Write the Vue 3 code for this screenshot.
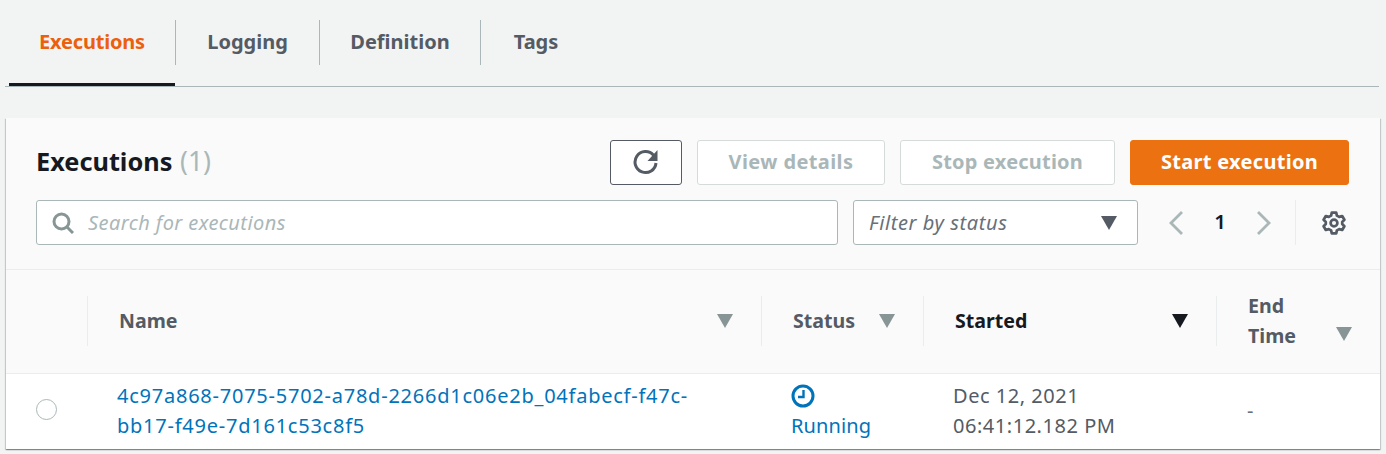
<script setup>
const tabs = [
  { label: 'Executions', active: true, w: 167 },
  { label: 'Logging', w: 144 },
  { label: 'Definition', w: 161 },
  { label: 'Tags', w: 110 }
]
</script>

<template>
  <div class="page">
    <nav class="tabs">
      <div v-for="t in tabs" :key="t.label" class="tab" :class="{ active: t.active }" :style="{ width: t.w + 'px' }">
        <span class="tab-label">{{ t.label }}</span>
      </div>
    </nav>

    <section class="card">
      <div class="head">
        <div class="title-row">
          <h2 class="title">Executions <span class="count">(1)</span></h2>
          <div class="actions">
            <button class="btn refresh" aria-label="Refresh">
              <svg width="26" height="26" viewBox="0 0 26 26" fill="none" stroke="#545b64" stroke-width="3">
                <path d="M20.5 6.2A10.5 10.5 0 1 0 23 14" />
                <path d="M24.5 1V12H14.5Z" fill="#545b64" stroke="none" />
              </svg>
            </button>
            <button class="btn disabled details">View details</button>
            <button class="btn disabled stop">Stop execution</button>
            <button class="btn primary">Start execution</button>
          </div>
        </div>
        <div class="filter-row">
          <div class="search">
            <svg width="22" height="22" viewBox="0 0 22 22" fill="none" stroke="#879596" stroke-width="3">
              <circle cx="9.5" cy="9.5" r="7.5" />
              <path d="M14.5 14.5L21 21" />
            </svg>
            <span class="placeholder">Search for executions</span>
          </div>
          <div class="select">
            <span>Filter by status</span>
            <i class="caret dark"></i>
          </div>
          <div class="pager">
            <svg width="16" height="26" viewBox="0 0 16 26" fill="none" stroke="#aab7b8" stroke-width="2.8"><path d="M14 2L3 13L14 24" /></svg>
            <span class="page-no">1</span>
            <svg width="16" height="26" viewBox="0 0 16 26" fill="none" stroke="#aab7b8" stroke-width="2.8"><path d="M2 2L13 13L2 24" /></svg>
          </div>
          <div class="settings">
            <svg width="24" height="24" viewBox="0 0 24 24" fill="none" stroke="#545b64" stroke-width="2.7" stroke-linejoin="round">
              <path d="M9.8 1.6h4.4l.7 3 2.3 1.3 3-.9 2.2 3.8-2.2 2.1v2.2l2.2 2.1-2.2 3.8-3-.9-2.3 1.3-.7 3H9.8l-.7-3-2.3-1.3-3 .9-2.2-3.8 2.2-2.1v-2.2L1.6 8.8l2.2-3.8 3 .9 2.3-1.3z" />
              <circle cx="12" cy="12" r="3.4" />
            </svg>
          </div>
        </div>
      </div>

      <div class="thead">
        <div class="th-blank"></div>
        <div class="th name"><span class="sep"></span><span>Name</span><i class="caret"></i></div>
        <div class="th status"><span class="sep"></span><span>Status</span><i class="caret"></i></div>
        <div class="th started"><span class="sep"></span><span>Started</span><i class="caret black"></i></div>
        <div class="th end"><span class="sep"></span><span>End<br />Time</span><i class="caret low"></i></div>
      </div>

      <div class="row">
        <div class="radio-cell"><span class="radio"></span></div>
        <div class="cell link">4c97a868-7075-5702-a78d-2266d1c06e2b_04fabecf-f47c-<br />bb17-f49e-7d161c53c8f5</div>
        <div class="cell running">
          <svg width="24" height="24" viewBox="0 0 24 24" fill="none" stroke="#0073bb" stroke-width="3">
            <circle cx="12" cy="12" r="10" />
            <path d="M12.5 6V13H7" stroke-width="2.4" />
          </svg>
          <span class="running-label">Running</span>
        </div>
        <div class="cell date">Dec 12, 2021<br />06:41:12.182 PM</div>
        <div class="cell dash">-</div>
      </div>
    </section>
  </div>
</template>

<style>
html, body { margin: 0; background: #f2f3f3; }
</style>

<style scoped>
.page {
  width: 1386px;
  height: 454px;
  overflow: hidden;
  background: #f2f3f3;
  font-family: "Noto Sans", sans-serif;
  font-size: 20px;
  color: #545b64;
  box-sizing: border-box;
  padding: 0 0 0 5px;
}
.tabs {
  display: flex;
  height: 87px;
  box-sizing: border-box;
  border-bottom: 1px solid #aab7b8;
  padding-left: 4px;
  margin-right: 7px;
}
.tab {
  height: 86px;
  box-sizing: border-box;
  padding-top: 20px;
  display: flex;
  justify-content: center;
  align-items: flex-start;
  position: relative;
}
.tab-label {
  font-weight: 700;
  font-size: 20px;
  display: block;
  width: 100%;
  text-align: center;
  border-right: 1px solid #aab7b8;
  height: 45px;
  line-height: 44px;
}
.tab:last-child .tab-label { border-right: 0; }
.tab.active { color: #ec5f0d; }
.tab.active .tab-label { letter-spacing: -0.2px; }
.tab.active::after {
  content: "";
  position: absolute;
  left: 0;
  right: 1px;
  bottom: 0;
  height: 3px;
  background: #16191f;
}
.card {
  margin-top: 31px;
  margin-left: 1px;
  width: 1374px;
  height: 331px;
  background: #fafafa;
  box-shadow: 0 1px 1px 0 rgba(0, 28, 36, 0.3), 1px 1px 1px 0 rgba(0, 28, 36, 0.15), -1px 1px 1px 0 rgba(0, 28, 36, 0.15);
  display: flex;
  flex-direction: column;
}
.head {
  height: 152px;
  box-sizing: border-box;
  padding: 22px 31px 0 30px;
  border-bottom: 1px solid #eaeded;
}
.title-row { display: flex; justify-content: space-between; align-items: center; height: 45px; }
.title { margin: 0; font-size: 25.3px; font-weight: 700; color: #16191f; line-height: 43px; height: 45px; }
.count { font-weight: 400; color: #aab7b8; font-size: 26.5px; margin-left: 1px; }
.actions { display: flex; gap: 15px; }
.btn {
  height: 45px;
  box-sizing: border-box;
  border-radius: 3px;
  font-family: inherit;
  font-size: 20px;
  font-weight: 700;
  padding: 0 0 2px;
  background: #fff;
  display: flex;
  align-items: center;
  justify-content: center;
  letter-spacing: 0.3px;
}
.refresh { width: 72px; border: 1px solid #545b64; padding: 0 0 1px; }
.disabled { border: 1px solid #d5dbdb; color: #aab7b8; }
.details { width: 188px; letter-spacing: 0.4px; }
.stop { width: 215px; letter-spacing: 0.2px; }
.primary { width: 219px; background: #ec7211; color: #fff; border: 1px solid #ec7211; }
.filter-row { display: flex; align-items: center; margin-top: 15px; height: 45px; }
.search {
  width: 802px;
  height: 45px;
  box-sizing: border-box;
  background: #fff;
  border: 1px solid #aab7b8;
  border-radius: 3px;
  display: flex;
  align-items: center;
  padding-left: 15px;
  gap: 14px;
}
.placeholder { font-style: italic; color: #aab7b8; font-size: 20px; letter-spacing: 0.43px; }
.select {
  width: 285px;
  height: 45px;
  box-sizing: border-box;
  margin-left: 15px;
  background: #fff;
  border: 1px solid #aab7b8;
  border-radius: 3px;
  display: flex;
  align-items: center;
  justify-content: space-between;
  padding: 0 20px 0 15px;
  font-style: italic;
  color: #687078;
  letter-spacing: 0.6px;
}
.pager { display: flex; align-items: center; width: 127px; margin-left: 30px; gap: 30px; height: 45px; flex: none; }
.page-no { color: #16191f; font-weight: 600; font-size: 20.5px; width: 12px; text-align: center; margin-top: -4px; }
.settings {
  height: 45px;
  border-left: 1px solid #eaeded;
  width: 52px;
  box-sizing: border-box;
  display: flex;
  align-items: center;
  padding-left: 26px;
}
.caret {
  display: inline-block;
  width: 0;
  height: 0;
  border-left: 8px solid transparent;
  border-right: 8px solid transparent;
  border-top: 14px solid #879596;
}
.caret.dark { border-top-color: #545b64; }
.caret.black { border-top-color: #16191f; }
.thead {
  height: 104px;
  display: grid;
  grid-template-columns: 81px 674px 162px 293px 164px;
  align-items: center;
  border-bottom: 1px solid #eaeded;
  box-sizing: border-box;
  padding-bottom: 2px;
}
.th {
  position: relative;
  display: flex;
  align-items: center;
  justify-content: space-between;
  font-size: 19.6px;
  font-weight: 700;
  height: 50px;
  padding: 0 28px 0 32px;
  line-height: 30px;
  box-sizing: border-box;
}
.sep { position: absolute; left: 0; top: 0; bottom: 0; width: 1px; background: #eaeded; }
.th.started { color: #16191f; padding-right: 28px; }
.caret.low { margin-top: 26px; }
.row {
  height: 75px;
  background: #fff;
  display: grid;
  grid-template-columns: 81px 674px 162px 293px 164px;
  align-items: center;
  box-sizing: border-box;
  padding-bottom: 1px;
}
.radio-cell { display: flex; justify-content: center; padding-bottom: 3px; }
.radio {
  width: 21px;
  height: 21px;
  border-radius: 50%;
  box-sizing: border-box;
  border: 1.5px solid #aab7b8;
  background: #fff;
}
.cell { line-height: 30px; }
.link { color: #0073bb; padding-left: 30px; letter-spacing: 0.76px; }
.running {
  color: #0073bb;
  display: flex;
  flex-direction: column;
  align-items: flex-start;
  align-self: start;
  padding: 10px 0 0 30px;
  gap: 3px;
}
.running-label { letter-spacing: 0.1px; }
.date { padding-left: 30px; letter-spacing: 0.53px; }
.dash { padding-left: 31px; color: #687078; }
</style>
